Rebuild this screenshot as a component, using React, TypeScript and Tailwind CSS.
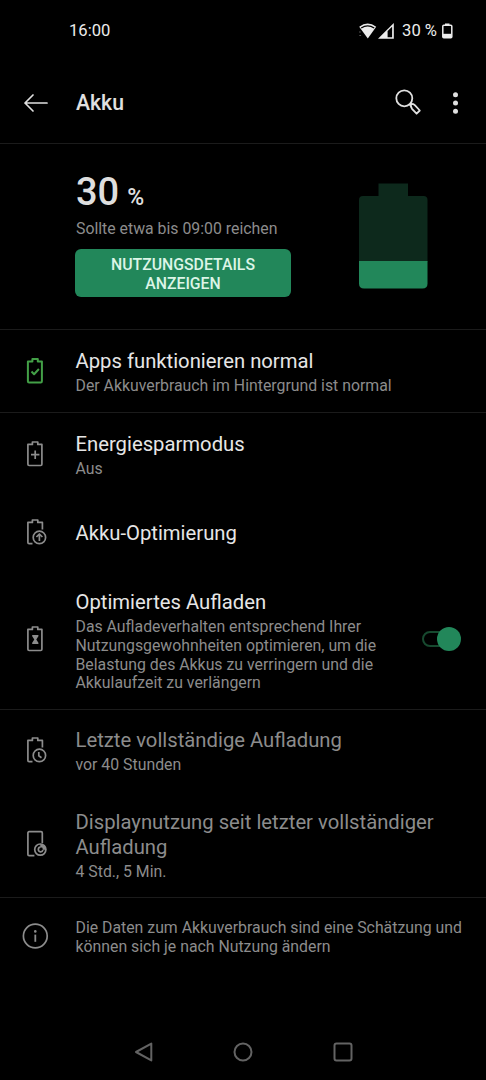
import type { ReactNode } from "react";

const BATTERY = "M8.3 5.4h4.1V3h5.4v2.4h4.1v19.9q0 1.2-1.2 1.2H9.1q-1.2 0-1.2-1.2V5.4z";

function Icon({ children, className = "" }: { children: ReactNode; className?: string }) {
  return (
    <svg
      width="30"
      height="30"
      viewBox="0 0 30 30"
      fill="none"
      stroke="currentColor"
      strokeWidth="1.7"
      strokeLinejoin="round"
      className={`shrink-0 ${className}`}
    >
      {children}
    </svg>
  );
}

const OkIcon = () => (
  <Icon className="text-[#43a047]">
    <path d={BATTERY} strokeWidth="2" />
    <path d="M11.5 15.5l2.6 2.7 4.8-5.2" strokeWidth="2" />
  </Icon>
);

const SaverIcon = () => (
  <Icon>
    <path d={BATTERY} />
    <path d="M15.2 11.5v8.4M11 15.7h8.4" />
  </Icon>
);

const OPEN_BATTERY = "M12.5 26.6H9.1q-1.2 0-1.2-1.2V5.4h4.5V3h5.4v2.4h4.6v7.2";

const OptimizeIcon = () => (
  <Icon>
    <path d={OPEN_BATTERY} />
    <circle cx="19.4" cy="20.4" r="6.2" />
    <path d="M19.4 24v-6.8M16.4 20l3-3 3 3" />
  </Icon>
);

const HourglassIcon = () => (
  <Icon>
    <path d={BATTERY} />
    <path d="M12.2 11h6.2v1.3L16.300 15.500l2.100 3.200V20h-6.200v-1.300l2.100-3.200-2.100-3.200z" fill="currentColor" stroke="none" />
  </Icon>
);

const ClockIcon = () => (
  <Icon>
    <path d={OPEN_BATTERY} />
    <circle cx="19.4" cy="20.4" r="6.2" />
    <path d="M18.8 17v3.8l2.7 1.9" />
  </Icon>
);

const ScreenIcon = () => (
  <Icon>
    <path d="M14.4 26.6H9.1q-1.2 0-1.2-1.2V3.9q0-1.2 1.2-1.2h12q1.2 0 1.2 1.2v10.3" />
    <circle cx="20.3" cy="20.6" r="5.6" />
    <path d="M20.6 18.2a2.3 2.3 0 1 0 2.3 2.7" />
    <path d="M20.4 15.2a5.5 5.5 0 0 1 5.4 5.6h-2.7a2.8 2.8 0 0 0-2.7-2.8z" fill="currentColor" strokeWidth="0.4" />
  </Icon>
);

const InfoIcon = () => (
  <Icon>
    <circle cx="15.3" cy="15" r="11.9" />
    <path d="M15.3 13.6v7.2" strokeWidth="1.8" />
    <circle cx="15.3" cy="10.4" r="1.3" fill="currentColor" stroke="none" />
  </Icon>
);

function Row({
  icon,
  title,
  sub,
  className,
  titleClass = "text-[#e6e6e6]",
  textClass = "pt-[3px]",
  trailing,
}: {
  icon: ReactNode;
  title?: ReactNode;
  sub?: ReactNode;
  className: string;
  titleClass?: string;
  textClass?: string;
  trailing?: ReactNode;
}) {
  return (
    <div className={`flex items-center pl-5 text-[#8c8c8c] ${className}`}>
      {icon}
      <div className={`ml-[25.5px] whitespace-nowrap ${textClass}`}>
        {title && <div className={`text-[20.25px] leading-[25px] ${titleClass}`}>{title}</div>}
        {sub && <div className={`text-[15.84px] leading-[18.8px] ${title ? "mt-[3px]" : ""}`}>{sub}</div>}
      </div>
      {trailing}
    </div>
  );
}

function Toggle() {
  return (
    <div className="mr-[25px] ml-auto flex h-6 w-[39px] items-center">
      <div className="h-4 w-[27px] shrink-0 rounded-full border-2 border-[#17492f]" />
      <div className="-ml-[12px] size-6 shrink-0 rounded-full bg-[#22875a]" />
    </div>
  );
}

export default function App() {
  return (
    <div className="flex h-[1080px] w-[486px] flex-col overflow-hidden bg-black font-['Roboto',sans-serif]">
      <div className="flex h-[62px] shrink-0 items-center pr-[32px] pl-[69px] text-[16.6px] text-[#ececec]">
        <span>16:00</span>
        <svg className="ml-auto" width="38" height="20" viewBox="0 0 38 20" fill="none">
          <path d="M1.2 5.8Q9.7-.6 18.2 5.8L9.8 17.4z" fill="#ececec" />
          <path d="M3.2 7Q9.7 2.6 16.2 7" stroke="#000" strokeWidth="1.3" />
          <path d="M1 11h1.8M1.3 14.5h1.8" stroke="#555" strokeWidth="1.2" />
          <path d="M20 17.8L35.8 2v15.8z" fill="#ececec" />
          <path d="M29.6 10v6.2h4.5V5.8z" fill="#000" />
        </svg>
        <span className="ml-[6px]">30 %</span>
        <svg className="ml-[4px]" width="13" height="18" viewBox="0 0 13 18" fill="none">
          <path d="M4 1.5h4.5v2H4z" fill="#ececec" />
          <rect x="1.8" y="3.2" width="9" height="12.6" rx="1" stroke="#ececec" strokeWidth="1.5" />
          <path d="M2 11.8h8.6v4H2z" fill="#ececec" />
        </svg>
      </div>
      <header className="flex h-[82px] shrink-0 items-center border-b border-[#1b1b1b] pl-[22px] text-[#e0e0e0]">
        <svg width="28" height="24" viewBox="0 0 28 24" fill="none" stroke="currentColor" strokeWidth="1.7" strokeLinecap="round" strokeLinejoin="round">
          <path d="M25 12H3M11 4L3 12l8 8" />
        </svg>
        <h1 className="ml-[26px] pt-px text-[21.2px] font-medium">Akku</h1>
        <svg className="ml-auto" width="30" height="30" viewBox="0 0 30 30" fill="none" stroke="currentColor" strokeWidth="1.8" strokeLinejoin="round">
          <circle cx="11.3" cy="10.3" r="8" />
          <path d="M16.3 16.2l2.1 2.4M17.800 16q2.400-.3 4 1.200l5 5.300-3.200 3.200-4.600-4.900q-1.500-2.200-1.200-4.800z" />
        </svg>
        <svg className="mr-[21px] ml-[24px]" width="18" height="30" viewBox="0 0 18 30" fill="currentColor">
          <circle cx="8.5" cy="6.8" r="2.5" />
          <circle cx="8.5" cy="15" r="2.5" />
          <circle cx="8.5" cy="23.2" r="2.5" />
        </svg>
      </header>
      <section className="flex h-[186px] shrink-0 items-start border-b border-[#1b1b1b] pl-[75px]">
        <div className="w-[216px] pt-[26px]">
          <div className="h-[44px] pl-px leading-[44px] font-medium text-[#dedede]">
            <span className="text-[38px]">30</span>
            <span className="ml-[8px] text-[23px]">%</span>
          </div>
          <div className="mt-[5px] pl-px text-[15.84px] leading-[19px] whitespace-nowrap text-[#8c8c8c]">
            Sollte etwa bis 09:00 reichen
          </div>
          <button className="mt-[11px] flex h-[48px] w-full items-center justify-center rounded-[6px] bg-[#22875a] pt-[3px] text-[15.8px] leading-[18.6px] font-medium text-[#dcf5e7]">
            <span>
              NUTZUNGSDETAILS
              <br />
              ANZEIGEN
            </span>
          </button>
        </div>
        <svg className="mt-[39px] ml-[68px]" width="69" height="107" viewBox="0 0 69 107">
          <path d="M19.5 .5h29.500v12.500h15.500q4 0 4 4V79H0V17q0-4 4-4h15.500z" fill="#0d291c" />
          <path d="M0 78h68.500v22.500q0 5-5 5H5q-5 0-5-5z" fill="#22875a" />
        </svg>
      </section>
      <Row
        className="h-[83px] shrink-0 border-b border-[#1b1b1b]"
        icon={<OkIcon />}
        title="Apps funktionieren normal"
        sub="Der Akkuverbrauch im Hintergrund ist normal"
      />
      <Row className="h-[81px] shrink-0" icon={<SaverIcon />} title="Energiesparmodus" sub="Aus" />
      <Row className="h-[76px] shrink-0" textClass="pt-[2px]" icon={<OptimizeIcon />} title="Akku-Optimierung" />
      <Row
        className="h-[140px] shrink-0 border-b border-[#1b1b1b] pb-[2px]"
        textClass="pt-[6px]"
        icon={<HourglassIcon />}
        title="Optimiertes Aufladen"
        sub={
          <>
            Das Aufladeverhalten entsprechend Ihrer
            <br />
            Nutzungsgewohnheiten optimieren, um die
            <br />
            Belastung des Akkus zu verringern und die
            <br />
            Akkulaufzeit zu verlängern
          </>
        }
        trailing={<Toggle />}
      />
      <Row
        className="h-[80px] shrink-0"
        titleClass="text-[#8c8c8c]"
        icon={<ClockIcon />}
        title="Letzte vollständige Aufladung"
        sub="vor 40 Stunden"
      />
      <Row
        className="h-[108px] shrink-0 border-b border-[#1b1b1b]"
        titleClass="text-[#8c8c8c]"
        textClass="pt-[4px]"
        icon={<ScreenIcon />}
        title={
          <>
            Displaynutzung seit letzter vollständiger
            <br />
            Aufladung
          </>
        }
        sub="4 Std., 5 Min."
      />
      <Row
        className="h-[75px] shrink-0"
        textClass="pt-[4px]"
        icon={<InfoIcon />}
        sub={
          <>
            Die Daten zum Akkuverbrauch sind eine Schätzung und
            <br />
            können sich je nach Nutzung ändern
          </>
        }
      />
      <nav className="mt-auto flex h-[57px] shrink-0 items-center justify-center gap-[80px] text-[#636363]">
        <svg width="20" height="20" viewBox="0 0 20 20" fill="none" stroke="currentColor" strokeWidth="2" strokeLinejoin="round">
          <path d="M18.3 1.6v16.8L3 10z" />
        </svg>
        <svg width="20" height="20" viewBox="0 0 20 20" fill="none" stroke="currentColor" strokeWidth="2">
          <circle cx="10" cy="10" r="8.5" />
        </svg>
        <svg width="20" height="20" viewBox="0 0 20 20" fill="none" stroke="currentColor" strokeWidth="2">
          <rect x="1.5" y="1.5" width="17" height="17" rx="2" />
        </svg>
      </nav>
    </div>
  );
}
